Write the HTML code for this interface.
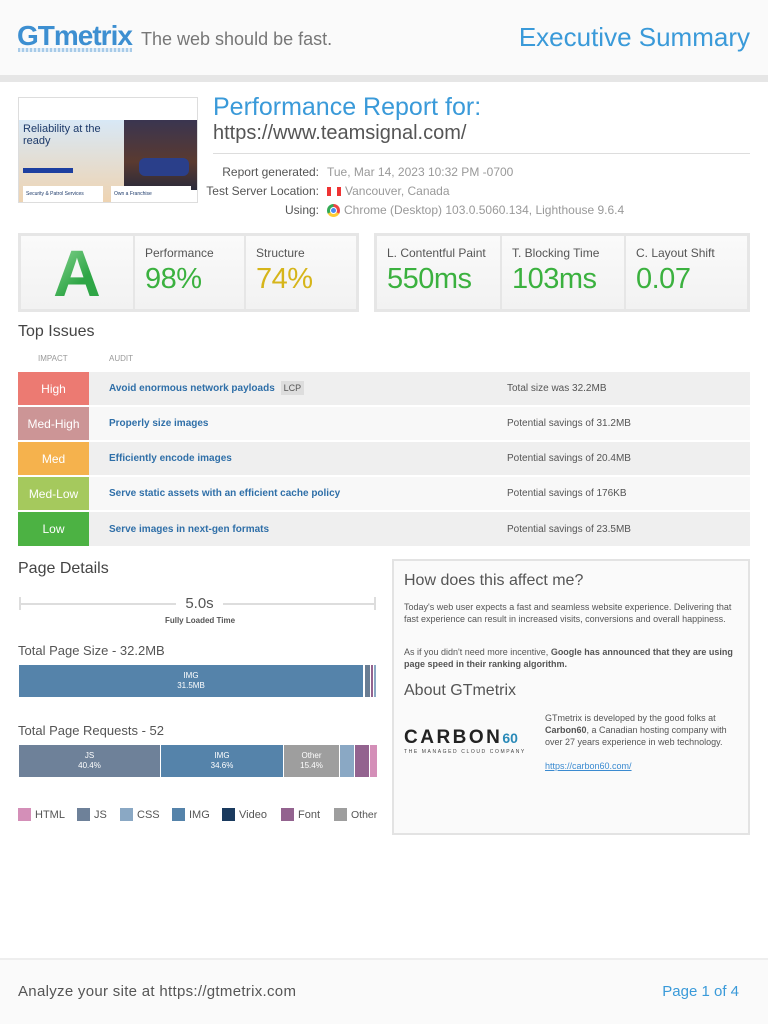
<!DOCTYPE html>
<html><head><meta charset="utf-8"><style>
*{margin:0;padding:0;box-sizing:border-box}
body{width:768px;height:1024px;background:#fff;font-family:"Liberation Sans",sans-serif;color:#555;position:relative;overflow:hidden}
.a{position:absolute}
.hdr{left:0;top:0;width:768px;height:75px;background:#fafafa}
.bar{left:0;top:75px;width:768px;height:7px;background:#e6e6e6}
.logo{left:17px;top:20px;font-size:28px;font-weight:bold;color:#3d8fd1;letter-spacing:-1px}
.tag{left:141px;top:29px;font-size:18px;color:#777}
.es{right:18px;top:22px;font-size:26px;color:#3a9ad9}
.thumb{left:18px;top:97px;width:180px;height:106px;border:1px solid #ddd;background:#fff;overflow:hidden}
.prf{left:213px;top:93px;font-size:25px;color:#3a9ad9}
.url{left:213px;top:122px;font-size:20px;color:#555}
.hr{left:213px;top:153px;width:537px;height:1px;background:#ddd}
.lab{width:140px;left:179px;text-align:right;font-size:12px;color:#555;white-space:nowrap}
.val{left:327px;font-size:12px;color:#999;white-space:nowrap}
.box{background:linear-gradient(#fafafa,#f2f2f2);border:3px solid #e6e6e6;display:flex}
.cell{border-right:2px solid #e6e6e6;padding:10px 0 0 10px}
.cell:last-child{border-right:none}
.cell .t{font-size:12px;color:#555}
.cell .v{font-size:29px;color:#3bb13f;margin-top:3px;letter-spacing:-0.5px}
h3{font-weight:normal;font-size:16px;color:#444}
.row{left:18px;width:732px;height:33px;display:flex;align-items:center;font-size:10px}
.imp{width:71px;height:33px;color:#fff;font-size:12px;display:flex;align-items:center;justify-content:center}
.aud{color:#2f6fa8;font-weight:bold;width:418px;padding-left:20px}
.lcp{background:#ddd;color:#555;font-weight:normal;font-size:9px;padding:2px 3px;margin-left:3px}
.seg{position:absolute;top:0;height:32px;color:#fff;font-size:8px;text-align:center;line-height:10px;padding-top:6px}
.lg{top:808px;font-size:11px;color:#555;display:flex;align-items:center}
.lg i{display:inline-block;width:13px;height:13px;margin-right:4px}
.rb{left:392px;top:559px;width:358px;height:276px;border:2px solid #e3e3e3;background:#fafafa}
.rb p{font-size:9px;line-height:12px;color:#555}
.ftr{left:0;top:958px;width:768px;height:66px;background:#fafafa;border-top:2px solid #eee}
</style></head><body>
<div class="a hdr"></div><div class="a bar"></div>
<div class="a logo">GTmetrix</div>
<div class="a" style="left:18px;top:48px;width:114px;height:4px;background:repeating-linear-gradient(90deg,#a8cbe8 0 2px,#e0edf8 2px 4px)"></div>
<div class="a tag">The web should be fast.</div>
<div class="a es">Executive Summary</div>

<div class="a thumb">
 <div style="position:absolute;left:0;top:22px;width:105px;height:84px;background:linear-gradient(#d8e8f6,#efd3b0)"></div>
 <div style="position:absolute;left:105px;top:22px;width:74px;height:70px;background:linear-gradient(#3a3550,#5a3a30 60%,#2a2a3a)"></div>
 <div style="position:absolute;left:120px;top:60px;width:50px;height:18px;background:#2a3f8a;border-radius:6px"></div>
 <div style="position:absolute;left:4px;top:25px;font-size:11px;color:#1d3a6a;line-height:12px">Reliability at the<br>ready</div>
 <div style="position:absolute;left:4px;top:70px;width:50px;height:5px;background:#1d3fa0"></div>
 <div style="position:absolute;left:4px;top:88px;width:80px;height:18px;background:#fff;font-size:5px;color:#1d3a6a;padding:5px 3px">Security &amp; Patrol Services</div>
 <div style="position:absolute;left:92px;top:88px;width:80px;height:18px;background:#fff;font-size:5px;color:#1d3a6a;padding:5px 3px">Own a Franchise</div>
</div>
<div class="a prf">Performance Report for:</div>
<div class="a url">https://www.teamsignal.com/</div>
<div class="a hr"></div>
<div class="a lab" style="top:165px">Report generated:</div><div class="a val" style="top:165px">Tue, Mar 14, 2023 10:32 PM -0700</div>
<div class="a lab" style="top:184px">Test Server Location:</div><div class="a val" style="top:184px"><span style="display:inline-block;width:14px;height:9px;background:linear-gradient(90deg,#e33 0 4px,#fff 4px 10px,#e33 10px);vertical-align:-1px;margin-right:4px"></span>Vancouver, Canada</div>
<div class="a lab" style="top:203px">Using:</div><div class="a val" style="top:203px"><span style="display:inline-block;width:13px;height:13px;border-radius:50%;background:conic-gradient(#e44 0 120deg,#fc3 120deg 240deg,#3a5 240deg);vertical-align:-3px;margin-right:4px;position:relative"><span style="position:absolute;left:3px;top:3px;width:7px;height:7px;border-radius:50%;background:#4a8af4;border:1px solid #fff"></span></span>Chrome (Desktop) 103.0.5060.134, Lighthouse 9.6.4</div>

<div class="a box" style="left:18px;top:233px;width:341px;height:79px">
 <div class="cell" style="width:114px;padding:0;display:flex;align-items:center;justify-content:center"><span style="font-size:66px;font-weight:bold;background:linear-gradient(135deg,#9fe0a6,#2fa646 60%);-webkit-background-clip:text;color:transparent">A</span></div>
 <div class="cell" style="width:111px"><div class="t">Performance</div><div class="v">98%</div></div>
 <div class="cell" style="width:110px"><div class="t">Structure</div><div class="v" style="color:#d6b51a">74%</div></div>
</div>
<div class="a box" style="left:374px;top:233px;width:376px;height:79px">
 <div class="cell" style="width:125px"><div class="t">L. Contentful Paint</div><div class="v">550ms</div></div>
 <div class="cell" style="width:124px"><div class="t">T. Blocking Time</div><div class="v">103ms</div></div>
 <div class="cell" style="width:121px"><div class="t">C. Layout Shift</div><div class="v">0.07</div></div>
</div>

<h3 class="a" style="left:18px;top:323px">Top Issues</h3>
<div class="a" style="left:38px;top:354px;font-size:8px;color:#999">IMPACT</div>
<div class="a" style="left:109px;top:354px;font-size:8px;color:#999">AUDIT</div>
<div class="a row" style="top:372px;background:#efefef"><div class="imp" style="background:#ec7a72">High</div><div class="aud">Avoid enormous network payloads <span class="lcp">LCP</span></div><div>Total size was 32.2MB</div></div>
<div class="a row" style="top:407px;background:#f8f8f8"><div class="imp" style="background:#cc9596">Med-High</div><div class="aud">Properly size images</div><div>Potential savings of 31.2MB</div></div>
<div class="a row" style="top:442px;background:#efefef"><div class="imp" style="background:#f5b24d">Med</div><div class="aud">Efficiently encode images</div><div>Potential savings of 20.4MB</div></div>
<div class="a row" style="top:477px;background:#f8f8f8"><div class="imp" style="background:#a5c95d">Med-Low</div><div class="aud">Serve static assets with an efficient cache policy</div><div>Potential savings of 176KB</div></div>
<div class="a row" style="top:512px;height:34px;background:#efefef"><div class="imp" style="background:#4cb243;height:34px">Low</div><div class="aud">Serve images in next-gen formats</div><div>Potential savings of 23.5MB</div></div>

<h3 class="a" style="left:18px;top:560px">Page Details</h3>
<div class="a" style="left:19px;top:597px;width:2px;height:13px;background:#ddd"></div>
<div class="a" style="left:374px;top:597px;width:2px;height:13px;background:#ddd"></div>
<div class="a" style="left:19px;top:603px;width:157px;height:2px;background:#ddd"></div>
<div class="a" style="left:223px;top:603px;width:152px;height:2px;background:#ddd"></div>
<div class="a" style="left:176px;top:595px;width:47px;text-align:center;font-size:15px;color:#555">5.0s</div>
<div class="a" style="left:150px;top:616px;width:100px;text-align:center;font-size:8px;font-weight:bold;color:#555">Fully Loaded Time</div>

<div class="a" style="left:18px;top:643px;font-size:13px;color:#555">Total Page Size - 32.2MB</div>
<div class="a" style="left:19px;top:665px;width:358px;height:33px">
 <div class="seg" style="left:0;width:344px;background:#5583aa">IMG<br>31.5MB</div>
 <div class="seg" style="left:346px;width:5px;background:#6a7d93"></div>
 <div class="seg" style="left:352px;width:2px;background:#93638f"></div>
 <div class="seg" style="left:355px;width:2px;background:#8aa8c4"></div>
</div>
<div class="a" style="left:18px;top:723px;font-size:13px;color:#555">Total Page Requests - 52</div>
<div class="a" style="left:19px;top:745px;width:358px;height:33px">
 <div class="seg" style="left:0;width:141px;background:#6e8199">JS<br>40.4%</div>
 <div class="seg" style="left:142px;width:122px;background:#5583aa">IMG<br>34.6%</div>
 <div class="seg" style="left:265px;width:55px;background:#9e9e9e">Other<br>15.4%</div>
 <div class="seg" style="left:321px;width:14px;background:#8aa8c4"></div>
 <div class="seg" style="left:336px;width:14px;background:#93638f"></div>
 <div class="seg" style="left:351px;width:7px;background:#d48fb8"></div>
</div>
<div class="a lg" style="left:18px"><i style="background:#d48fb8"></i>HTML</div>
<div class="a lg" style="left:77px"><i style="background:#6e8199"></i>JS</div>
<div class="a lg" style="left:120px"><i style="background:#8aa8c4"></i>CSS</div>
<div class="a lg" style="left:172px"><i style="background:#5583aa"></i>IMG</div>
<div class="a lg" style="left:222px"><i style="background:#1a3a5e"></i>Video</div>
<div class="a lg" style="left:281px"><i style="background:#93638f"></i>Font</div>
<div class="a lg" style="left:334px;font-size:10.5px"><i style="background:#9e9e9e"></i>Other</div>

<div class="a rb">
 <div class="a" style="left:10px;top:11px;font-size:16px;color:#555">How does this affect me?</div>
 <p class="a" style="left:10px;top:40px;width:335px">Today's web user expects a fast and seamless website experience. Delivering that fast experience can result in increased visits, conversions and overall happiness.</p>
 <p class="a" style="left:10px;top:85px;width:335px">As if you didn't need more incentive, <b>Google has announced that they are using page speed in their ranking algorithm.</b></p>
 <div class="a" style="left:10px;top:121px;font-size:16px;color:#555">About GTmetrix</div>
 <div class="a" style="left:10px;top:166px;font-size:19px;font-weight:bold;letter-spacing:2.5px;color:#222">CARBON<span style="color:#2a8ab8;font-size:14px;letter-spacing:0">60</span></div>
 <div class="a" style="left:10px;top:188px;font-size:5px;letter-spacing:1.6px;color:#444">THE MANAGED CLOUD COMPANY</div>
 <p class="a" style="left:151px;top:151px;width:200px">GTmetrix is developed by the good folks at <b>Carbon60</b>, a Canadian hosting company with over 27 years experience in web technology.</p>
 <p class="a" style="left:151px;top:199px;color:#3a8ad0;text-decoration:underline">https://carbon60.com/</p>
</div>

<div class="a ftr"></div>
<div class="a" style="left:18px;top:983px;font-size:15px;color:#555;letter-spacing:0.3px">Analyze your site at https://gtmetrix.com</div>
<div class="a" style="right:29px;top:983px;font-size:15px;color:#3a9ad9">Page 1 of 4</div>
</body></html>
